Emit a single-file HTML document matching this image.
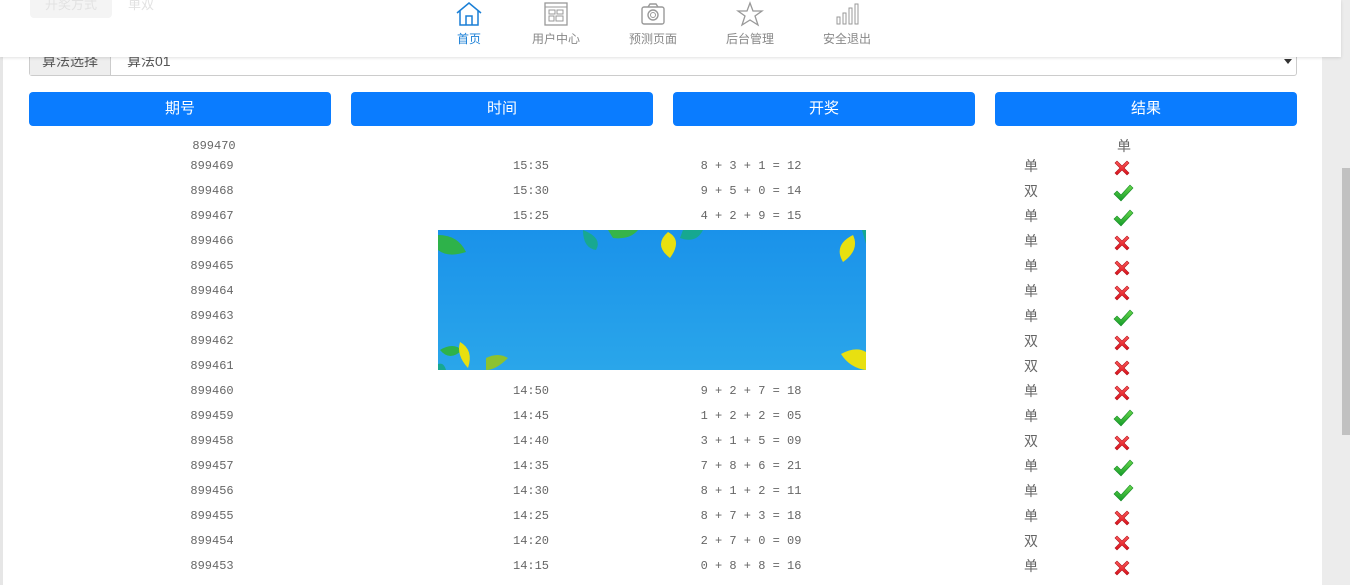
<!DOCTYPE html>
<html><head><meta charset="utf-8">
<style>
*{margin:0;padding:0;box-sizing:border-box}
html,body{width:1350px;height:585px;overflow:hidden}
body{background:#fff;position:relative;font-family:"Liberation Sans","Noto Sans CJK SC",sans-serif;color:#555}
.lb{position:absolute;left:0;top:0;width:3px;height:585px;background:#e6e6e6}
.track{position:absolute;left:1322px;top:0;width:28px;height:585px;background:#ececec}
.thumb{position:absolute;left:1342px;top:168px;width:8px;height:267px;background:#c1c1c1}
.hdr{position:absolute;left:0;top:0;width:1341px;height:57px;background:#fff;box-shadow:0 1px 3px rgba(0,0,0,.12);z-index:5}
.nav{position:absolute;top:1px;width:80px;text-align:center;font-size:12px;color:#888}
.nav svg{display:block;margin:0 auto 3px}
.nav.on{color:#1a7fd6}
.sel{position:absolute;left:29px;top:47px;width:1268px;height:29px;border:1px solid #ccc;border-radius:3px;background:#fff}
.sel .lab{position:absolute;left:0;top:0;width:81px;height:27px;background:#eee;border-right:1px solid #ccc;font-size:14px;color:#555;text-align:center;line-height:27px}
.sel .v{position:absolute;left:97px;top:0;line-height:27px;font-size:14px;color:#555}
.sel .ar{position:absolute;right:4px;top:11px;border:4px solid transparent;border-top:5px solid #333}
.btn{position:absolute;top:92px;width:302px;height:34px;background:#0a7cff;border-radius:4px;color:#fff;font-size:15px;text-align:center;line-height:34px}
.r{position:absolute;left:0;width:1320px;height:25px;font-family:"Liberation Mono","Noto Sans CJK SC",monospace;font-size:12px;color:#666}
.r span{position:absolute;top:0;line-height:25px;transform:translateX(-50%);white-space:pre}
.r .ds{font-family:"Noto Sans CJK SC",sans-serif;font-size:14px}
.ic{position:absolute;left:1112px;top:4px}
.ban{position:absolute;left:438px;top:230px;width:428px;height:140px;z-index:2}
</style></head><body>
<div class="lb"></div><div class="track"></div><div class="thumb"></div>

<div class="hdr">
 <div style="position:absolute;left:30px;top:-8px;width:82px;height:26px;background:#f4f4f4;border-radius:4px;color:#e2e2e2;font-size:13px;text-align:center;line-height:26px">开奖方式</div>
 <div style="position:absolute;left:128px;top:-8px;line-height:26px;color:#e2e2e2;font-size:13px">单双</div>
 <div class="nav on" style="left:429px"><svg width="28" height="26" viewBox="0 0 28 26"><path d="M2 12 L14 2 L26 12 M5 10 V24 H23 V10 M11 24 V15 H17 V24" fill="none" stroke="#1a7fd6" stroke-width="1.5"/></svg>首页</div>
 <div class="nav" style="left:516px"><svg width="28" height="26" viewBox="0 0 28 26"><rect x="3" y="2" width="22" height="22" fill="none" stroke="#999" stroke-width="1.3"/><path d="M3 6 H25" stroke="#999"/><rect x="7" y="9" width="6" height="4" fill="none" stroke="#999"/><rect x="15" y="9" width="6" height="4" fill="none" stroke="#999"/><rect x="7" y="15" width="5" height="5" fill="none" stroke="#999"/><rect x="14" y="15" width="7" height="5" fill="none" stroke="#999"/></svg>用户中心</div>
 <div class="nav" style="left:613px"><svg width="28" height="26" viewBox="0 0 28 26"><rect x="3" y="6" width="22" height="17" rx="2" fill="none" stroke="#999" stroke-width="1.4"/><path d="M9 6 L11 3 H17 L19 6" fill="none" stroke="#999" stroke-width="1.4"/><circle cx="14" cy="14" r="5" fill="none" stroke="#999" stroke-width="1.4"/><circle cx="14" cy="14" r="2.5" fill="none" stroke="#999"/></svg>预测页面</div>
 <div class="nav" style="left:710px"><svg width="28" height="26" viewBox="0 0 28 26"><path d="M14 2 L17 10 L26 10 L19 15 L22 24 L14 19 L6 24 L9 15 L2 10 L11 10 Z" fill="none" stroke="#999" stroke-width="1.3"/></svg>后台管理</div>
 <div class="nav" style="left:807px"><svg width="28" height="26" viewBox="0 0 28 26"><rect x="4" y="16" width="3" height="7" fill="none" stroke="#999"/><rect x="10" y="12" width="3" height="11" fill="none" stroke="#999"/><rect x="16" y="7" width="3" height="16" fill="none" stroke="#999"/><rect x="22" y="3" width="3" height="20" fill="none" stroke="#999"/></svg>安全退出</div>
</div>

<div class="sel"><div class="lab">算法选择</div><div class="v">算法01</div><div class="ar"></div></div>

<div class="btn" style="left:29px">期号</div>
<div class="btn" style="left:351px">时间</div>
<div class="btn" style="left:673px">开奖</div>
<div class="btn" style="left:995px">结果</div>

<svg width="0" height="0" style="position:absolute">
<defs>
<linearGradient id="gx" x1="0" y1="0" x2="0" y2="1"><stop offset="0" stop-color="#ff5a5a"/><stop offset="1" stop-color="#d8101a"/></linearGradient>
<linearGradient id="gc" x1="0" y1="0" x2="0" y2="1"><stop offset="0" stop-color="#6ad84a"/><stop offset="1" stop-color="#139a2a"/></linearGradient>
<symbol id="x" viewBox="0 0 20 20"><path d="M3 5 L5 3 L10 8 L15 3 L17 5 L12 10 L17 15 L15 17 L10 12 L5 17 L3 15 L8 10 Z" fill="url(#gx)" stroke="#b0101a" stroke-width=".6"/></symbol>
<symbol id="c" viewBox="0 0 20 20"><path d="M1 11 L4 8 L8 12 L17 2 L20 5 L8 18 Z" fill="url(#gc)" stroke="#138a25" stroke-width=".6"/></symbol>
</defs></svg>

<div class="r" style="top:134px"><span style="left:214px">899470</span><span class="ds" style="left:1124px">单</span></div>
<div class="r" style="top:154px"><span style="left:212px">899469</span><span style="left:531px">15:35</span><span style="left:751px">8 + 3 + 1 = 12</span><span class="ds" style="left:1031px">单</span><svg class="ic" width="20" height="20"><use href="#x"/></svg></div>
<div class="r" style="top:179px"><span style="left:212px">899468</span><span style="left:531px">15:30</span><span style="left:751px">9 + 5 + 0 = 14</span><span class="ds" style="left:1031px">双</span><svg class="ic" width="22" height="20"><use href="#c"/></svg></div>
<div class="r" style="top:204px"><span style="left:212px">899467</span><span style="left:531px">15:25</span><span style="left:751px">4 + 2 + 9 = 15</span><span class="ds" style="left:1031px">单</span><svg class="ic" width="22" height="20"><use href="#c"/></svg></div>
<div class="r" style="top:229px"><span style="left:212px">899466</span><span style="left:531px">15:20</span><span style="left:751px">1 + 2 + 3 = 06</span><span class="ds" style="left:1031px">单</span><svg class="ic" width="20" height="20"><use href="#x"/></svg></div>
<div class="r" style="top:254px"><span style="left:212px">899465</span><span style="left:531px">15:15</span><span style="left:751px">1 + 2 + 3 = 06</span><span class="ds" style="left:1031px">单</span><svg class="ic" width="20" height="20"><use href="#x"/></svg></div>
<div class="r" style="top:279px"><span style="left:212px">899464</span><span style="left:531px">15:10</span><span style="left:751px">1 + 2 + 3 = 06</span><span class="ds" style="left:1031px">单</span><svg class="ic" width="20" height="20"><use href="#x"/></svg></div>
<div class="r" style="top:304px"><span style="left:212px">899463</span><span style="left:531px">15:05</span><span style="left:751px">1 + 2 + 3 = 06</span><span class="ds" style="left:1031px">单</span><svg class="ic" width="22" height="20"><use href="#c"/></svg></div>
<div class="r" style="top:329px"><span style="left:212px">899462</span><span style="left:531px">15:00</span><span style="left:751px">1 + 2 + 3 = 06</span><span class="ds" style="left:1031px">双</span><svg class="ic" width="20" height="20"><use href="#x"/></svg></div>
<div class="r" style="top:354px"><span style="left:212px">899461</span><span style="left:531px">14:55</span><span style="left:751px">2 + 6 + 3 = 11</span><span class="ds" style="left:1031px">双</span><svg class="ic" width="20" height="20"><use href="#x"/></svg></div>
<div class="r" style="top:379px"><span style="left:212px">899460</span><span style="left:531px">14:50</span><span style="left:751px">9 + 2 + 7 = 18</span><span class="ds" style="left:1031px">单</span><svg class="ic" width="20" height="20"><use href="#x"/></svg></div>
<div class="r" style="top:404px"><span style="left:212px">899459</span><span style="left:531px">14:45</span><span style="left:751px">1 + 2 + 2 = 05</span><span class="ds" style="left:1031px">单</span><svg class="ic" width="22" height="20"><use href="#c"/></svg></div>
<div class="r" style="top:429px"><span style="left:212px">899458</span><span style="left:531px">14:40</span><span style="left:751px">3 + 1 + 5 = 09</span><span class="ds" style="left:1031px">双</span><svg class="ic" width="20" height="20"><use href="#x"/></svg></div>
<div class="r" style="top:454px"><span style="left:212px">899457</span><span style="left:531px">14:35</span><span style="left:751px">7 + 8 + 6 = 21</span><span class="ds" style="left:1031px">单</span><svg class="ic" width="22" height="20"><use href="#c"/></svg></div>
<div class="r" style="top:479px"><span style="left:212px">899456</span><span style="left:531px">14:30</span><span style="left:751px">8 + 1 + 2 = 11</span><span class="ds" style="left:1031px">单</span><svg class="ic" width="22" height="20"><use href="#c"/></svg></div>
<div class="r" style="top:504px"><span style="left:212px">899455</span><span style="left:531px">14:25</span><span style="left:751px">8 + 7 + 3 = 18</span><span class="ds" style="left:1031px">单</span><svg class="ic" width="20" height="20"><use href="#x"/></svg></div>
<div class="r" style="top:529px"><span style="left:212px">899454</span><span style="left:531px">14:20</span><span style="left:751px">2 + 7 + 0 = 09</span><span class="ds" style="left:1031px">双</span><svg class="ic" width="20" height="20"><use href="#x"/></svg></div>
<div class="r" style="top:554px"><span style="left:212px">899453</span><span style="left:531px">14:15</span><span style="left:751px">0 + 8 + 8 = 16</span><span class="ds" style="left:1031px">单</span><svg class="ic" width="20" height="20"><use href="#x"/></svg></div>

<svg class="ban" viewBox="0 0 428 140">
<defs><linearGradient id="bg" x1="0" y1="0" x2="0" y2="1"><stop offset="0" stop-color="#1a92ea"/><stop offset="1" stop-color="#2aa6ea"/></linearGradient></defs>
<rect width="428" height="140" fill="url(#bg)"/>
<path d="M0 5 Q20 5 28 22 Q10 28 0 20Z" fill="#2eb24a"/>
<path d="M145 0 Q165 8 158 20 Q145 18 145 0Z" fill="#18a890"/>
<path d="M170 0 L200 0 Q192 10 175 8Z" fill="#36b44a"/>
<path d="M230 2 Q245 10 232 28 Q215 15 230 2Z" fill="#e8e010"/>
<path d="M245 0 L265 0 Q258 14 242 8Z" fill="#16a890"/>
<path d="M415 5 Q422 20 405 32 Q395 15 415 5Z" fill="#e8e010"/>
<path d="M424 0 L428 0 L428 14Z" fill="#16a890"/>
<path d="M2 120 Q15 112 24 120 Q12 132 2 120Z" fill="#2eb24a"/>
<path d="M22 112 Q36 120 30 138 Q18 125 22 112Z" fill="#e8e010"/>
<path d="M48 128 Q60 122 70 128 Q58 140 48 140Z" fill="#8cc230"/>
<path d="M0 134 Q6 132 8 140 L0 140Z" fill="#18a890"/>
<path d="M403 124 Q418 116 428 122 L428 140 Q412 138 403 124Z" fill="#e8e010"/>
</svg>
</body></html>
